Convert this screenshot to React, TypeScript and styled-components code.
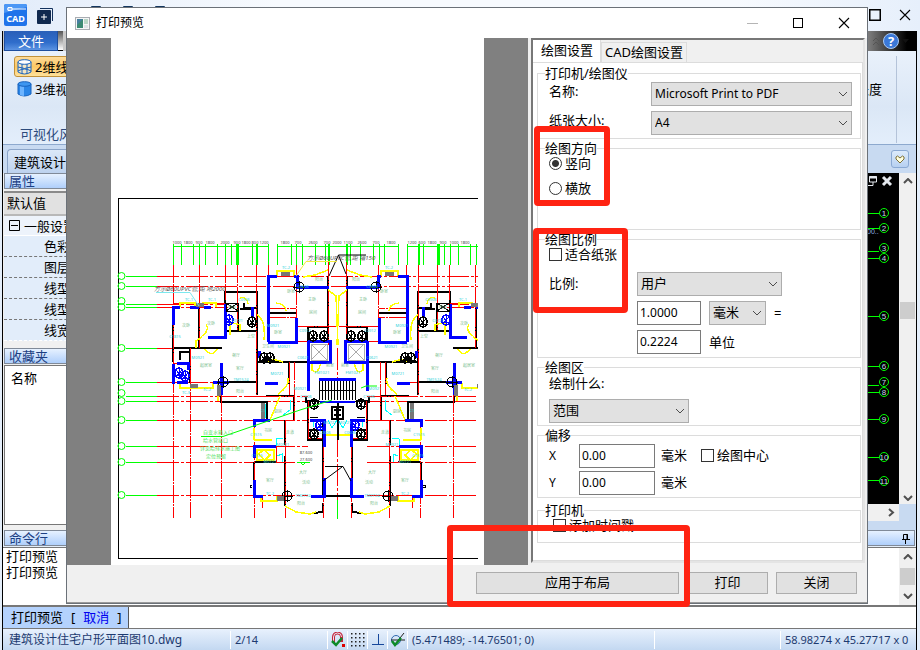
import React from "react";
import styled, { createGlobalStyle, css } from "styled-components";

const ui = `"Noto Sans", "Noto Sans CJK SC", sans-serif`;

const GlobalStyle = createGlobalStyle`
  * { box-sizing: border-box; }
  body { margin: 0; font: 13px/18px ${ui}; color: #000; background: #e4eefa; }
  button, input, select { font: inherit; color: inherit; margin: 0; }
  svg { display: block; flex: none; }
`;

/* ---------- application window ---------- */

const Shell = styled.div`
  position: relative;
  min-height: 100vh;
  display: flex;
  flex-direction: column;
  overflow: hidden;
`;

const TitleBar = styled.header`
  height: 31px;
  flex: none;
  display: flex;
  align-items: flex-start;
  gap: 8px;
  padding: 4px 5px 0 4px;
  background: linear-gradient(90deg, #e2ecfa, #f7fafe 30%, #f7fafe 80%, #e6effb);
`;

const Spacer = styled.div<{ $grow?: number }>`
  flex: ${(p) => p.$grow ?? 1};
`;

const IconButton = styled.button`
  display: flex;
  align-items: center;
  justify-content: center;
  width: 20px;
  height: 22px;
  padding: 0;
  border: 0;
  background: none;
`;

const QuickTools = styled.div`
  display: flex;
  gap: 12px;
  padding-left: 24px;
`;

const WindowButtons = styled.div`
  display: flex;
  gap: 10px;
`;

const Frame = styled.div`
  flex: 1;
  display: flex;
  flex-direction: column;
  margin: 0 3px 1px 2px;
  border-left: 1px solid #000;
  border-right: 1px solid #000;
`;

const RibbonTabs = styled.div`
  height: 20px;
  flex: none;
  display: flex;
  padding-left: 1px;
  background: linear-gradient(90deg, #c7c7c7 0, #d8d8d8 90%, #777 95%, #000 99%);
`;

const FileTab = styled.button`
  width: 54px;
  height: 20px;
  padding: 0;
  border: 1px solid #1e4e9e;
  border-top: 0;
  background: linear-gradient(#2a5fb8, #2f6dcb 60%, #5b93e2);
  color: #fff;
  line-height: 18px;
`;

const TabShade = styled.div`
  width: 5px;
  background: linear-gradient(#555, #fff);
  border-bottom: 1px solid #000;
`;

const TabTail = styled.div`
  display: flex;
  align-items: center;
  gap: 3px;
  margin-left: auto;
  padding-right: 7px;
`;

const Ribbon = styled.section`
  height: 94px;
  flex: none;
  display: flex;
  justify-content: space-between;
  padding: 5px 19px 0 11px;
  border-bottom: 1px solid #8da9ce;
  background: linear-gradient(#e9f1fb, #dbe7f6 60%, #e3eefb);
`;

const StyleTools = styled.div`
  display: flex;
  flex-direction: column;
  gap: 1px;
  width: 100px;
`;

const ToolButton = styled.button<{ $active?: boolean }>`
  height: 21px;
  display: flex;
  align-items: center;
  gap: 3px;
  padding: 0 2px;
  white-space: nowrap;
  border: 1px solid transparent;
  border-radius: 3px;
  background: none;
  ${(p) =>
    p.$active &&
    css`
      border-color: #c2923a;
      background: linear-gradient(#fddb9a, #fdc864 50%, #fee19b);
    `}
`;

const RibbonCaption = styled.span`
  margin-top: auto;
  padding: 0 0 1px 6px;
  color: #2c4a7c;
`;

const RibbonGroup = styled.div`
  margin-bottom: 1px;
  padding: 24px 14px 0 0;
  border-right: 1px solid #b4c3d9;
`;

const DocTabs = styled.div`
  height: 28px;
  flex: none;
  display: flex;
  align-items: center;
  justify-content: space-between;
  padding: 0 7px 0 4px;
  background: #c8daf1;
`;

const DocTab = styled.button`
  align-self: flex-end;
  height: 24px;
  padding: 0 6px;
  border: 1px solid #8ba5c9;
  border-width: 1px 0 0 1px;
  border-radius: 4px 0 0 0;
  background: linear-gradient(#dbe8f8, #bdd2ee);
`;

const HeartButton = styled.button`
  width: 18px;
  height: 18px;
  display: flex;
  align-items: center;
  justify-content: center;
  padding: 0;
  border: 1px solid #8aa9d3;
  border-radius: 3px;
  background: linear-gradient(#dcebfc, #b7d0f0);
`;

const Workspace = styled.div`
  flex: 1;
  display: flex;
  min-height: 348px;
`;

const SidePanel = styled.aside`
  width: 200px;
  display: flex;
  flex-direction: column;
  padding: 0 0 5px 1px;
  background: #f0f0f0;
`;

const PaneTitle = styled.h2`
  height: 16px;
  flex: none;
  display: flex;
  align-items: center;
  justify-content: space-between;
  margin: 0;
  padding: 0 4px 0 4px;
  border: 1px solid #808a98;
  background: linear-gradient(#e6f1ff, #afcffb);
  color: #1c3f83;
  font-size: 13px;
  font-weight: 400;
  line-height: 14px;
`;

const DefaultsRow = styled.div`
  height: 25px;
  margin-top: 2px;
  padding: 1px 3px;
  border-top: 2px solid #8a8a8a;
  border-bottom: 2px solid #b8b8b8;
  background: #e1e1e1;
`;

const SectionRow = styled.div`
  height: 20px;
  display: flex;
  align-items: center;
  gap: 4px;
  padding-left: 5px;
  background: #edf3fb;
  border-bottom: 1px solid #fff;
`;

const PropertyList = styled.ul`
  margin: 0;
  padding: 0;
  list-style: none;
  background: #e2edfa;
`;

const Property = styled.li`
  height: 21px;
  padding: 1px 0 0 40px;
  border-bottom: 1px dashed #777;
  &:last-child { border-bottom-color: #fff; }
`;

const FavouriteTitle = styled(PaneTitle)`
  margin-top: 7px;
`;

const FavouriteList = styled.div`
  flex: 1;
  margin-top: 1px;
  padding: 3px 6px;
  border: 1px solid #777;
  background: #fff;
`;

const CanvasColumn = styled.div`
  flex: 1;
  display: flex;
  flex-direction: column;
  padding-bottom: 8px;
  background: #c8daf1;
`;

const CanvasRow = styled.div`
  flex: 1;
  display: flex;
`;

const ModelCanvas = styled.div`
  flex: 1;
  display: flex;
  justify-content: flex-end;
  background: #000;
`;

const VScroll = styled.div`
  width: 17px;
  display: flex;
  flex-direction: column;
  align-items: center;
  padding: 5px 1px 3px;
  background: #f0f0f0;
`;

const HScroll = styled.div`
  height: 17px;
  margin-right: 17px;
  display: flex;
  align-items: center;
  justify-content: flex-end;
  padding-right: 4px;
  background: #f0f0f0;
  margin-bottom: 1px;
`;

const Thumb = styled.div`
  width: 15px;
  height: 17px;
  background: #cdcdcd;
`;

const CommandTitle = styled(PaneTitle)`
  margin: 0 1px 0 1px;
`;

const CommandLog = styled.div`
  height: 60px;
  flex: none;
  display: flex;
  justify-content: space-between;
  margin-top: 1px;
  padding-left: 3px;
  border-top: 1px solid #777;
  border-bottom: 2px solid #777;
  background: #fff;
  line-height: 16px;
`;

const LogScroll = styled(VScroll)`
  padding: 6px 1px;
`;

const PromptRow = styled.div`
  height: 22px;
  flex: none;
  display: flex;
  background: #fff;
  border-bottom: 1px solid #777;
`;

const Prompt = styled.label`
  width: 126px;
  display: flex;
  gap: 8px;
  padding: 1px 0 0 8px;
  border-right: 1px solid #555;
  background: #b4d2fd;
`;

const CancelLink = styled.a`
  color: #0000f0;
  text-decoration: none;
`;

const PromptInput = styled.input`
  flex: 1;
  border: 0;
  outline: 0;
`;

const StatusBar = styled.footer`
  height: 21px;
  flex: none;
  display: flex;
  align-items: center;
  padding-left: 6px;
  background: linear-gradient(#e8f1fd, #c3d8f1);
  color: #1d3a70;
  font-size: 11px;
`;

const StatusCell = styled.div<{ $grow?: number; $width?: number }>`
  height: 18px;
  flex: ${(p) => (p.$grow ? p.$grow : "none")};
  width: ${(p) => (p.$width ? `${p.$width}px` : "auto")};
  display: flex;
  align-items: center;
  white-space: nowrap;
  padding-left: 4px;
  border-left: 1px solid #fff;
  &:first-child { border-left: 0; padding-left: 0; }
`;

const FileName = styled.span`
  font-size: 12px;
`;

const StatusIcon = styled(IconButton)`
  height: 18px;
  border-left: 1px solid #fff;
`;

/* ---------- print dialog ---------- */

const Dialog = styled.section`
  position: absolute;
  left: 66px;
  right: 52px;
  top: 7px;
  display: flex;
  flex-direction: column;
  border: 1px solid #6b7178;
  background: #f0f0f0;
`;

const DialogTitle = styled.header`
  height: 30px;
  display: flex;
  align-items: center;
  padding: 0 13px 0 8px;
  background: #fff;
  font-size: 12px;
`;

const DialogName = styled.h1`
  flex: 1;
  margin: 0 0 0 6px;
  font-size: 12px;
  font-weight: 400;
`;

const DialogControls = styled.div`
  display: flex;
  gap: 26px;
`;

const DialogBody = styled.div`
  display: flex;
  gap: 3px;
  padding-right: 2px;
`;

const Preview = styled.div`
  flex: 1;
  display: flex;
  justify-content: center;
  background: #808080;
`;

const Page = styled.div`
  background: #fff;
`;

const Settings = styled.div`
  position: relative;
  width: 334px;
  display: flex;
  flex-direction: column;
  margin-bottom: 2px;
  border: 2px solid #e4e4e4;
  border-left-color: #777;
  border-top: 2px solid #777;
`;

const Tabs = styled.div`
  display: flex;
  align-items: flex-end;
  height: 22px;
`;

const Tab = styled.button<{ $active?: boolean }>`
  height: ${(p) => (p.$active ? 23 : 20)}px;
  margin-bottom: ${(p) => (p.$active ? -1 : 0)}px;
  padding: ${(p) => (p.$active ? "0 7px 4px 8px" : "0 3px 1px")};
  border: 1px solid #dcdcdc;
  border-width: ${(p) => (p.$active ? "0 1px 0 0" : "1px 1px 0 1px")};
  background: ${(p) => (p.$active ? "#fff" : "#f0f0f0")};
  line-height: 18px;
  white-space: nowrap;
`;

const TabBody = styled.form`
  flex: 1;
  padding: 1px 1px 15px 4px;
  border: 1px solid #dcdcdc;
  border-left: 0;
  background: #fff;
`;

const Group = styled.fieldset<{ $bottom: number; $top?: number }>`
  min-width: 0;
  margin: ${(p) => p.$top ?? 0}px 0 0;
  padding: 0 8px ${(p) => p.$bottom}px 11px;
  border: 1px solid #dcdcdc;
`;

const Legend = styled.legend`
  margin-left: -4px;
  padding: 0;
  line-height: 18px;
`;

const Fields = styled.div<{ $label: number }>`
  display: grid;
  grid-template-columns: ${(p) => p.$label}px 1fr;
  row-gap: 5px;
  align-items: start;
`;

const FieldLabel = styled.label<{ $line?: number }>`
  display: block;
  line-height: ${(p) => p.$line ?? 18}px;
`;

const FieldRow = styled.div`
  display: flex;
  align-items: center;
  gap: 8px;
`;

const ScaleFields = styled(Fields)`
  margin-top: 9px;
`;

const RatioColumn = styled.div`
  display: flex;
  flex-direction: column;
  gap: 5px;
`;

const AreaField = styled.div`
  display: flex;
  flex-direction: column;
  gap: 9px;
`;

const ChoiceColumn = styled.div`
  display: flex;
  flex-direction: column;
  gap: 10px;
`;

const Choice = styled.label<{ $indent?: number }>`
  height: 15px;
  display: flex;
  align-items: flex-start;
  gap: 3px;
  margin-left: ${(p) => p.$indent ?? 0}px;
  line-height: 12px;
  white-space: nowrap;
`;

const CheckBox = styled.input.attrs({ type: "checkbox" })`
  appearance: none;
  width: 13px;
  height: 13px;
  flex: none;
  border: 1px solid #333;
  background: #fff;
`;

const Radio = styled.input.attrs({ type: "radio" })`
  appearance: none;
  width: 13px;
  height: 13px;
  flex: none;
  border: 1px solid #333;
  border-radius: 50%;
  background: #fff;
  &:checked { background: radial-gradient(circle, #333 0 3px, #fff 4px); }
`;

const SelectWrap = styled.span<{ $width?: number }>`
  position: relative;
  display: block;
  width: ${(p) => (p.$width ? `${p.$width}px` : "100%")};
  svg { position: absolute; right: 4px; top: 9px; pointer-events: none; }
`;

const SelectBox = styled.select<{ $latin?: boolean }>`
  appearance: none;
  display: block;
  width: 100%;
  height: 24px;
  padding: ${(p) => (p.$latin ? "0 14px 0 3px" : "0 14px 2px 3px")};
  border: 1px solid #adadad;
  border-radius: 0;
  background: #e1e1e1;
  font-size: ${(p) => (p.$latin ? 12 : 13)}px;
`;

const TextBox = styled.input<{ $width: number }>`
  width: ${(p) => p.$width}px;
  height: 24px;
  padding: 0 2px 2px;
  border: 1px solid #7a7a7a;
  background: #fff;
  font-size: 12px;
`;

const OffsetGrid = styled.div`
  display: grid;
  grid-template-columns: 30px 76px 40px auto;
  row-gap: 3px;
  justify-content: start;
  align-items: center;
`;

const Axis = styled.label`
  font-size: 12px;
`;

const Unit = styled.span`
  padding: 0 0 2px 6px;
`;

const DialogFooter = styled.footer`
  position: relative;
  height: 38px;
  display: flex;
  justify-content: flex-end;
  gap: 8px;
  padding: 7px 10px 0 0;
  border-bottom: 1px solid #9a9a9a;
`;

const PushButton = styled.button<{ $wide?: boolean }>`
  width: ${(p) => (p.$wide ? 203 : 81)}px;
  height: 22px;
  padding: 0 0 2px;
  border: 1px solid #adadad;
  background: #e1e1e1;
  line-height: 18px;
`;

const Highlight = styled.div<{ $area: "orientation" | "scale" | "apply" }>`
  position: absolute;
  border: 6px solid #ff2312;
  border-radius: 4px;
  pointer-events: none;
  ${(p) =>
    p.$area === "orientation" &&
    css`left: 1px; top: 86px; width: 76px; height: 80px;`}
  ${(p) =>
    p.$area === "scale" &&
    css`left: 0; top: 188px; width: 95px; height: 85px;`}
  ${(p) =>
    p.$area === "apply" &&
    css`right: 177px; top: -40px; width: 243px; height: 82px;`}
`;

/* ---------- icons ---------- */

const Chevron = ({ up, bold }: { up?: boolean; bold?: boolean }) => (
  <svg width="10" height="6" viewBox="0 0 10 6" fill="none" stroke={bold ? "#505050" : "#4c4c4c"} strokeWidth={bold ? 2 : 1}>
    <path d={up ? "M1 5 5 1 9 5" : "M1 1 5 5 9 1"} />
  </svg>
);

const CloseGlyph = () => (
  <svg width="12" height="12" viewBox="0 0 12 12" stroke="#000" strokeWidth="1.1">
    <path d="M1 1 11 11M11 1 1 11" />
  </svg>
);

const SquareGlyph = ({ size = 11, weight = 1 }: { size?: number; weight?: number }) => (
  <svg width={size} height={size} viewBox={`0 0 ${size} ${size}`} fill="none" stroke="#000" strokeWidth={weight}>
    <rect x={weight / 2} y={weight / 2} width={size - weight} height={size - weight} />
  </svg>
);

const CadLogo = () => (
  <svg width="23" height="22" viewBox="0 0 23 22" role="img" aria-label="CAD">
    <rect width="23" height="22" rx="2" fill="#1f73ea" />
    <path d="M0 9 23 3V2Q23 0 21 0H2Q0 0 0 2Z" fill="#4c97f5" />
    <path d="M3 5H22M4 3.500h4v3h-4z" stroke="#fff" fill="#1f73ea" />
    <text x="11.500" y="17.500" fill="#fff" fontSize="9" fontWeight="700" textAnchor="middle" fontFamily="Noto Sans">CAD</text>
  </svg>
);

const PlusIcon = () => (
  <svg width="17" height="17" viewBox="0 0 17 17">
    <path d="M3 1.500H15.500V14" fill="none" stroke="#12315d" />
    <rect y="3" width="14" height="14" rx="1" fill="#10294f" />
    <path d="M7 7v6M4 10h6" stroke="#fff" />
  </svg>
);

const ToolBlock = () => (
  <svg width="14" height="18" viewBox="0 0 14 18"><rect x="1" width="10" height="15" rx="1" fill="#14375f" /></svg>
);

const Cylinder = ({ solid }: { solid?: boolean }) => (
  <svg width="15" height="16" viewBox="0 0 15 16">
    <path d="M1 3V13Q7.500 17 14 13V3Z" fill={solid ? "#2a86e8" : "#f3e6c4"} stroke="#1762be" />
    {solid && <path d="M3 4V14Q5 15 7 15V5Z" fill="#6db4ff" />}
    <ellipse cx="7.500" cy="3" rx="6.500" ry="2.300" fill={solid ? "#3d96f0" : "#fff"} stroke="#1762be" />
    {!solid && <path d="M5 5V15M10 5V15M1 8Q7.500 11 14 8M1 12Q7.500 8 14 12" fill="none" stroke="#1762be" />}
  </svg>
);

const MinusBox = () => (
  <svg width="11" height="11" viewBox="0 0 11 11" fill="none" stroke="#000"><path d="M.5.5h10v10H.5ZM2 5.500h7" /></svg>
);

const DialogIcon = () => (
  <svg width="15" height="13" viewBox="0 0 15 13">
    <rect x=".5" y=".5" width="14" height="12" fill="#f5f5f5" stroke="#a9adb2" />
    <rect x="2" y="2" width="6" height="9" fill="#3c8a72" />
    <path d="M2 2h6L2 8Z" fill="#477f9f" />
    <rect x="9" y="2" width="4" height="5" fill="#b9d6c6" />
    <rect x="9" y="8" width="4" height="3" fill="#dfe3e6" />
  </svg>
);

const HelpIcon = () => (
  <svg width="16" height="16" viewBox="0 0 16 16">
    <circle cx="8" cy="8" r="7.500" fill="#3a78d8" stroke="#a8c8f2" />
    <text x="8" y="12.500" fill="#fff" fontSize="13" fontWeight="700" textAnchor="middle" fontFamily="Noto Sans">?</text>
  </svg>
);

const Pin = () => (
  <svg width="8" height="11" viewBox="0 0 8 11" fill="none" stroke="#000">
    <path d="M1.500 6V1.500H5.500V6M5 1V6M0 6.500H8M3.500 7V11" />
  </svg>
);

const Heart = () => (
  <svg width="10" height="9" viewBox="0 0 10 9" fill="#ffffe0" stroke="#7d6f35">
    <path d="M5 8 1 4V2L2.500 1 5 3 7.500 1 9 2V4Z" />
  </svg>
);

const CollapseIcon = () => (
  <svg width="8" height="9" viewBox="0 0 8 9" fill="none" stroke="#555"><path d="M1 4 4 1 7 4M1 8 4 5 7 8" /></svg>
);

const DropIcon = () => (
  <svg width="7" height="4" viewBox="0 0 7 4"><path d="M0 0h7L3.500 4Z" fill="#111" /></svg>
);

const SnapIcon = () => (
  <svg width="15" height="15" viewBox="0 0 15 15" fill="none">
    <path d="M3.500 10V5a4 4 0 0 1 8 0v5" stroke="#c4243a" strokeWidth="3" />
    <path d="M3.500 9V5a4 4 0 0 1 8 0" stroke="#e8e3ee" />
    <path d="M2 9 6 13 12 6" stroke="#0d8a28" strokeWidth="2.500" />
    <rect x="12" y="12" width="3" height="3" fill="#d00" />
  </svg>
);

const GridIcon = () => (
  <svg width="15" height="15" viewBox="0 0 15 15" fill="#222">
    {[0, 4, 8, 12].map((y) => [0, 4, 8, 12].map((x) => <rect key={`${x}-${y}`} x={x + 1} y={y + 1} width="1.500" height="1.500" />))}
  </svg>
);

const OrthoIcon = () => (
  <svg width="14" height="13" viewBox="0 0 14 13" stroke="#17479b"><path d="M7.500 1V11.500M1 11.500H13" /></svg>
);

const PolarIcon = () => (
  <svg width="16" height="15" viewBox="0 0 16 15" fill="none">
    <circle cx="6" cy="8" r="4.500" stroke="#3068b0" />
    <path d="M1 8H15M6 11 14 1" stroke="#222" />
    <path d="M2 9 5 13 11 6" stroke="#0d8a28" strokeWidth="2.500" />
  </svg>
);

/* ---------- drawings ---------- */

const modelAxes: [number, number][] = [
  [213, 213], [228, 228], [248, 251], [258, 258], [316, 316], [366, 366], [382, 385], [392, 392], [419, 419], [457, 457], [481, 480],
];

const ModelDrawing = () => (
  <svg width="50" height="331" viewBox="850 173 50 331">
    <g fill="none" stroke="#0f0">
      {modelAxes.map(([c, l]) => (
        <React.Fragment key={c}>
          <path d={`M850 ${l + 0.5}H880`} shapeRendering="crispEdges" />
          <circle cx="885" cy={c} r="4.500" />
        </React.Fragment>
      ))}
    </g>
    {modelAxes.map(([c], i) => (
      <text key={c} x="885" y={c + 3} fill="#c9d4ee" fontSize="8" textAnchor="middle" fontFamily="Liberation Sans">{i + 1}</text>
    ))}
    <text x="868" y="234" fill="#8fb4ea" fontSize="7" fontFamily="Liberation Sans">00..</text>
    <g fill="none" stroke="#e4e8ee">
      <path d="M870.500 176.500H877.500V182H870.500ZM867.500 180.500V185.500H874V182" />
      <path d="M870 177.500H878" strokeWidth="2" />
      <path d="M884 177 892 185M892 177 884 185" strokeWidth="3" />
    </g>
  </svg>
);

const axisRows: [number, number][] = [
  [276, 276], [286, 286], [301, 304], [307, 307], [348, 348], [382, 382], [393, 396], [401, 401], [420, 420], [446, 446], [462, 462], [495, 495],
];

const ticks = [173, 181, 193, 199, 205, 217, 225, 231, 236, 237, 238, 252, 256, 257, 268, 277, 291, 296, 302, 315, 325, 328, 329];

const halfRed =
  "M173.500 265V518M190.500 348V518M221.500 395V518M199.500 265V348M225.500 265V300M237.500 265V331M256.500 265V395M268.500 265V300M296.500 265V342M254.500 420V518M285.500 420V518M328.500 262V345M323.500 440V518M262.500 495V508M289.500 362V395M294.500 362V420M268 308.500H296M268 317.500H296M296 326.500H338M266 396.500H294M173 303.500H225M276 446V462H285M190 363H173M308.500 401V438H322M296 341H308";
const halfBlack =
  "M173 307V362M173 348H222M190 348V383M199 307V348M225 304V292H257V395M238 303V331M225 331H257M268 313H297M257 362H297M289 362V384M221 383V402H267V420M266 396H294V420M222 382H257M285 420V445M285 456V506M254 462V480M254 462H277M328 276V341M308 341V327H329M307 401H337M308 401V440H324M323 420V497M323 496H338M323 503V512L314 513M296 362H308V378M240 309H252M309 430H323M180 360V352H190M244 303V308H256M306 397V403";
const halfBlue =
  "M173 325V307H180M190 307H199M204 307H211M268 342V276H277M294 276H297V288M296 318V342H268M225 304V337H208M296 287H329M221 363V395M213 382H229M265 383H278M254 427V420H270M276 446H254V458M254 480V496H263M308 341H330V362H308V341M308 362V379M308 379V391M324 447V420H310M311 496H324V478M252 307V317M319 379H338M320 401H338M173 364V384M177 363H188V370M177 382H188M259 351V358";
const halfYellow =
  "M180 307V303H195V307M203 307V303H216V307M277 276V271H294V276M180 383V388H213V383M261 496V501H277V496M254 428V440M254 440H272M257 450H274V460H257ZM258 454 264 450 270 455 265 460 258 454M303 277 315 275 328 270M285 506 296 512 310 514 316 512M324 435H338M196 348V341L202 337M270 420 280 396M218 383V401M230 335V322L240 325V331M276 303Q286 304 286 311M283 362Q274 358 266 362M203 336Q210 328 206 325M278 394Q290 386 288 378M328 290 336 296 338 345M312 362V370Q318 376 321 362M205 349Q212 358 217 349M240 298Q247 296 248 304M257 315Q266 320 264 340";
const halfCyan = "M265 404V418M276 446V439L283 438M277 456 282 454V462M290 400V410L283 415M313 420V427M328 420 332 428 337 420";

const blocks: [number, number, string][] = [
  [252, 322, "#000"], [264, 358, "#000"], [270, 358, "#000"], [229, 320, "#00f"], [313, 336, "#000"], [324, 336, "#000"],
  [179, 373, "#00f"], [185, 376, "#00f"], [314, 404, "#000"], [320, 425, "#00f"], [314, 434, "#000"],
];

const cyanLabels: [number, number, string][] = [
  [189, 301, "TC-1"], [212, 301, "TC-1"], [286, 269, "TC-2"], [244, 301, "C0906"], [175, 338, "C1815"], [198, 359, "M0921"],
  [273, 327, "M0921"], [237, 322, "C0721"], [284, 348, "M0921"], [241, 381, "TM1524"], [186, 394, "TC-3"], [207, 391, "TC-2"],
  [263, 412, "C1"], [256, 436, "C1515"], [283, 446, "M0921"], [270, 463, "M0721"], [257, 457, "C1515"], [270, 495, "TC-2"],
  [303, 288, "C0606"], [305, 332, "C0912"], [303, 359, "C0621"], [303, 497, "TM2724"], [322, 374, "FM1021"], [330, 424, "M0721"],
  [306, 398, "C1506"], [300, 390, "M0921"], [277, 375, "M0721"], [325, 434, "C0606"],
];

const roomLabels: [number, number, string][] = [
  [186, 327, "次卧"], [211, 325, "次卧"], [206, 367, "起居室"], [236, 357, "餐厅"], [240, 370, "客厅"], [251, 338, "上空"],
  [291, 293, "卧室"], [278, 334, "卧室"], [312, 301, "主卧"], [313, 314, "房间"], [240, 393, "阳台"], [278, 413, "厨房"],
  [268, 432, "书房"], [270, 482, "客厅"], [303, 474, "大厅"], [306, 484, "活动"], [301, 505, "阳台"], [268, 348, "卫生间"],
  [330, 367, "前室"], [290, 434, "走道"], [232, 309, "阳台"], [319, 281, "阳台"],
];

const dims: [number, string][] = [
  [177, "1000"], [188, "1800"], [199, "900"], [210, "1800"], [225, "2000"], [237, "900"], [246, "1800"], [255, "800"], [264, "1200"],
  [285, "1800"], [298, "700"], [313, "2600"], [327, "700"], [337, "2000"], [348, "1100"], [362, "2600"], [376, "700"],
  [391, "1800"], [412, "1200"], [422, "600"], [432, "1800"], [443, "900"], [454, "1000"], [465, "1800"],
];

const PlanHalf = () => (
  <g>
    <path d={halfBlack} stroke="#000" strokeWidth="2" />
    <path d={halfRed} stroke="#f00" strokeDasharray="18 1 2 1" />
    <path d={halfYellow} stroke="#ff0" strokeWidth="1.500" />
    <path d={halfCyan} stroke="#0ff" />
    <path d={halfBlue} stroke="#00f" strokeWidth="3" />
    {blocks.map(([x, y, c]) => (
      <g key={`${x}-${y}`} stroke={c}>
        <ellipse cx={x} cy={y} rx="4" ry="5" strokeWidth="1.500" />
        <path d={`M${x - 5} ${y + 2}H${x + 5}M${x - 3} ${y - 3} ${x + 3} ${y + 4}M${x} ${y - 5}V${y + 5}M${x + 4} ${y - 4} ${x - 3} ${y + 4}`} />
      </g>
    ))}
    {[[299, 287], [223, 382], [287, 496]].map(([x, y]) => (
      <g key={x} stroke="#000">
        <circle cx={x} cy={y} r="5" />
        <path d={`M${x - 6} ${y}H${x + 6}M${x} ${y - 6}V${y + 6}`} />
      </g>
    ))}
    <g fill="#777" stroke="none">
      <rect x="281" y="272" width="9" height="4" />
      <rect x="196" y="303" width="8" height="4" />
      <rect x="217" y="385" width="4" height="11" />
      <rect x="190" y="384" width="8" height="4" />
      <rect x="261" y="403" width="4" height="16" />
      <rect x="277" y="496" width="7" height="5" />
    </g>
    <path d="M226 303H238V311H226ZM226 303 238 311M238 303 226 311" stroke="#000" />
    <path d="M311 344H327V360H311ZM311 344 327 360M327 344 311 360" stroke="#aaa" />
    <path d="M252 485H250V487H252M310 417H318" stroke="#000" />
  </g>
);

const PairedLabels = ({ items }: { items: [number, number, string][] }) => (
  <>
    {items.map(([x, y, t]) => (
      <React.Fragment key={`${x}-${y}`}>
        <text x={x} y={y}>{t}</text>
        {x > 205 && <text x={675 - x} y={y}>{t}</text>}
      </React.Fragment>
    ))}
  </>
);

const axisPath = (y: number) => {
  if (y === 348) return "M157 348.500H173";
  if (y === 304 || y === 307) return `M157 ${y}.5H228M447 ${y}.5H478`;
  if (y === 382) return "M157 382.500H216M408 382.500H446";
  if (y > 390) return `M157 ${y}.5H308M367 ${y}.5H478`;
  return `M157 ${y}.5H478`;
};

const FloorPlan = () => (
  <svg width="373" height="527" viewBox="111 38 373 527" role="img" aria-label="建筑平面图">
    <defs>
      <clipPath id="sheet"><rect x="111" y="38" width="367" height="527" /></clipPath>
    </defs>
    <g clipPath="url(#sheet)" fill="none" shapeRendering="crispEdges">
      <path d="M480 198.500H118.500V558.500H480" stroke="#000" />
      <g stroke="#f00" strokeDasharray="22 2 3 2">
        {axisRows.map(([, y]) => (
          <path key={y} d={axisPath(y)} />
        ))}
        <path d="M337.500 348V500M412.500 495V508" />
      </g>
      <g stroke="#0f0">
        {axisRows.map(([c, y]) => (
          <path key={c} d={`M126 ${y}.5H157`} />
        ))}
        <path d="M173 246.500H268M277 246.500H398M407 246.500H478" />
        {ticks.map((x) => (
          <path key={x} d={`M${x}.5 244V265M${675 - x}.5 244V265`} />
        ))}
        <path d="M337.500 500V519" />
      </g>
      <PlanHalf />
      <g transform="translate(675 0) scale(-1 1)"><PlanHalf /></g>
      <rect x="319" y="381" width="37" height="20" fill="#fff" />
      <path d={Array.from({ length: 13 }, (_, i) => `M${319.5 + i * 3} 381V400`).join("") + "M319 390.500H356"} stroke="#000" />
      <path d="M337.500 403V440" stroke="#000" strokeWidth="2" />
      <path d="M332 407H343V419H332ZM334 410H341M334 415H341M337 407V419" stroke="#000" strokeWidth="2" />
    </g>
    <g fill="none" clipPath="url(#sheet)">
      {axisRows.map(([c]) => (
        <circle key={c} cx="121.500" cy={c} r="3.500" stroke="#0f0" />
      ))}
      <path d="M329 276 338.500 255 346 274M338.500 255H366M325 466.500H343L351 481M323 481 342 467" stroke="#000" />
      <path d="M156 292.500H190L199 306" stroke="#7ce8ee" />
      <path d="M296 276 306 261.500H337" stroke="#f4ec40" />
      <path d="M201 436.500H223L300 410 332 400M361 388 366 386H377M297 462.500H310M300 462 303 465 306 462" stroke="#0f0" />
    </g>
    <g clipPath="url(#sheet)" fontFamily="Noto Sans, Noto Sans CJK SC" textAnchor="middle">
      <g fill="#2fd3da" fontSize="4"><PairedLabels items={cyanLabels} /></g>
      <g fill="#7fbf92" fontSize="4"><PairedLabels items={roomLabels} /></g>
      <g fill="#444" fontSize="4">
        {dims.map(([x, t]) => (
          <text key={x} x={x} y="244">{t}</text>
        ))}
        <text x="306" y="454">87.600</text>
        <text x="306" y="461">27.600</text>
      </g>
      <g fill="#555" fontSize="6" fontStyle="italic" textAnchor="start">
        <text x="154" y="291">方示Ø60UPVC管,距 地2000</text>
        <text x="307" y="260">方示Ø60UPVC管,距 墙150</text>
      </g>
      <g fill="#4fe060" fontSize="5" textAnchor="start">
        <text x="203" y="434">自变水箱入口</text>
        <text x="203" y="442">给水管接口</text>
        <text x="200" y="450">详见给排水施工图</text>
        <text x="206" y="458">定位预留</text>
      </g>
    </g>
  </svg>
);

/* ---------- composition ---------- */

type DropProps = { id: string; label?: string; value: string; width?: number; latin?: boolean };

const Drop = ({ id, label, value, width, latin }: DropProps) => (
  <SelectWrap $width={width}>
    <SelectBox id={id} aria-label={label} $latin={latin} defaultValue={value}>
      <option>{value}</option>
    </SelectBox>
    <Chevron />
  </SelectWrap>
);

const PrintDialog = () => (
  <Dialog role="dialog" aria-labelledby="dialog-name">
    <DialogTitle>
      <DialogIcon />
      <DialogName id="dialog-name">打印预览</DialogName>
      <DialogControls>
        <IconButton aria-label="最小化">
          <svg width="11" height="2" viewBox="0 0 11 2"><path d="M0 1.500H11" stroke="#b5b5b5" /></svg>
        </IconButton>
        <IconButton aria-label="最大化"><SquareGlyph size={10} /></IconButton>
        <IconButton aria-label="关闭窗口"><CloseGlyph /></IconButton>
      </DialogControls>
    </DialogTitle>
    <DialogBody>
      <Preview>
        <Page><FloorPlan /></Page>
      </Preview>
      <Settings>
        <Tabs role="tablist">
          <Tab role="tab" aria-selected="true" $active>绘图设置</Tab>
          <Tab role="tab" aria-selected="false">CAD绘图设置</Tab>
        </Tabs>
        <TabBody>
          <Group $bottom={3}>
            <Legend>打印机/绘图仪</Legend>
            <Fields $label={102}>
              <FieldLabel htmlFor="printer">名称:</FieldLabel>
              <Drop id="printer" value="Microsoft Print to PDF" latin />
              <FieldLabel htmlFor="paper">纸张大小:</FieldLabel>
              <Drop id="paper" value="A4" latin />
            </Fields>
          </Group>
          <Group $bottom={32}>
            <Legend>绘图方向</Legend>
            <ChoiceColumn>
              <Choice><Radio name="orientation" defaultChecked />竖向</Choice>
              <Choice><Radio name="orientation" />横放</Choice>
            </ChoiceColumn>
          </Group>
          <Group $bottom={3}>
            <Legend>绘图比例</Legend>
            <Choice><CheckBox />适合纸张</Choice>
            <ScaleFields $label={88}>
              <FieldLabel htmlFor="ratio" $line={22}>比例:</FieldLabel>
              <RatioColumn>
                <Drop id="ratio" value="用户" width={145} />
                <FieldRow>
                  <TextBox $width={64} defaultValue="1.0000" aria-label="图纸长度" />
                  <Drop id="unit" label="长度单位" value="毫米" width={57} />
                  <span>=</span>
                </FieldRow>
                <FieldRow>
                  <TextBox $width={64} id="units" defaultValue="0.2224" />
                  <label htmlFor="units">单位</label>
                </FieldRow>
              </RatioColumn>
            </ScaleFields>
          </Group>
          <Group $bottom={2}>
            <Legend>绘图区</Legend>
            <AreaField>
              <FieldLabel htmlFor="area" $line={14}>绘制什么:</FieldLabel>
              <Drop id="area" value="范围" width={140} />
            </AreaField>
          </Group>
          <Group $bottom={2}>
            <Legend>偏移</Legend>
            <OffsetGrid>
              <Axis htmlFor="offset-x">X</Axis>
              <TextBox $width={76} id="offset-x" defaultValue="0.00" />
              <Unit>毫米</Unit>
              <Choice $indent={6}><CheckBox />绘图中心</Choice>
              <Axis htmlFor="offset-y">Y</Axis>
              <TextBox $width={76} id="offset-y" defaultValue="0.00" />
              <Unit>毫米</Unit>
            </OffsetGrid>
          </Group>
          <Group $bottom={8} $top={3}>
            <Legend>打印机</Legend>
            <Choice $indent={4}><CheckBox />添加时间戳</Choice>
          </Group>
        </TabBody>
        <Highlight $area="orientation" />
        <Highlight $area="scale" />
      </Settings>
    </DialogBody>
    <DialogFooter>
      <PushButton $wide>应用于布局</PushButton>
      <PushButton>打印</PushButton>
      <PushButton>关闭</PushButton>
      <Highlight $area="apply" />
    </DialogFooter>
  </Dialog>
);

export default function App() {
  return (
    <>
      <GlobalStyle />
      <Shell>
        <TitleBar>
          <CadLogo />
          <IconButton aria-label="新建"><PlusIcon /></IconButton>
          <QuickTools>
            <IconButton aria-label="打开"><ToolBlock /></IconButton>
            <IconButton aria-label="保存"><ToolBlock /></IconButton>
            <IconButton aria-label="另存为"><ToolBlock /></IconButton>
          </QuickTools>
          <Spacer />
          <WindowButtons>
            <IconButton aria-label="还原"><SquareGlyph size={12} weight={1.5} /></IconButton>
            <IconButton aria-label="退出"><CloseGlyph /></IconButton>
          </WindowButtons>
        </TitleBar>
        <Frame>
          <RibbonTabs>
            <FileTab>文件</FileTab>
            <TabShade />
            <TabTail><CollapseIcon /><HelpIcon /><DropIcon /></TabTail>
          </RibbonTabs>
          <Ribbon>
            <StyleTools>
              <ToolButton $active><Cylinder />2维线框</ToolButton>
              <ToolButton><Cylinder solid />3维视图</ToolButton>
              <RibbonCaption>可视化风格</RibbonCaption>
            </StyleTools>
            <RibbonGroup>长度</RibbonGroup>
          </Ribbon>
          <DocTabs>
            <DocTab>建筑设计住宅户形平面图10.dwg</DocTab>
            <HeartButton aria-label="收藏"><Heart /></HeartButton>
          </DocTabs>
          <Workspace>
            <SidePanel>
              <PaneTitle>属性</PaneTitle>
              <DefaultsRow>默认值</DefaultsRow>
              <SectionRow><MinusBox />一般设置</SectionRow>
              <PropertyList>
                {["色彩", "图层", "线型", "线型比例", "线宽"].map((name) => (
                  <Property key={name}>{name}</Property>
                ))}
              </PropertyList>
              <FavouriteTitle>收藏夹</FavouriteTitle>
              <FavouriteList>名称</FavouriteList>
            </SidePanel>
            <CanvasColumn>
              <CanvasRow>
                <ModelCanvas><ModelDrawing /></ModelCanvas>
                <VScroll>
                  <Chevron up bold />
                  <Spacer $grow={2} />
                  <Thumb />
                  <Spacer $grow={3} />
                  <Chevron bold />
                </VScroll>
              </CanvasRow>
              <HScroll>
                <svg width="7" height="9" viewBox="0 0 7 9" fill="none" stroke="#505050" strokeWidth="2"><path d="M1 1 5 4.500 1 8" /></svg>
              </HScroll>
            </CanvasColumn>
          </Workspace>
          <CommandTitle>命令行<Pin /></CommandTitle>
          <CommandLog>
            <div>打印预览<br />打印预览</div>
            <LogScroll>
              <Chevron up bold />
              <Spacer />
              <Thumb />
              <Spacer />
              <Chevron bold />
            </LogScroll>
          </CommandLog>
          <PromptRow>
            <Prompt htmlFor="command">打印预览 <span>[</span><CancelLink href="#cancel">取消</CancelLink><span>]</span></Prompt>
            <PromptInput id="command" />
          </PromptRow>
          <StatusBar>
            <StatusCell $width={221}><FileName>建筑设计住宅户形平面图10.dwg</FileName></StatusCell>
            <StatusCell $width={97}>2/14</StatusCell>
            <StatusIcon aria-label="捕捉"><SnapIcon /></StatusIcon>
            <StatusIcon aria-label="栅格"><GridIcon /></StatusIcon>
            <StatusIcon aria-label="正交"><OrthoIcon /></StatusIcon>
            <StatusIcon aria-label="极轴"><PolarIcon /></StatusIcon>
            <StatusCell $grow={2}>(5.471489; -14.76501; 0)</StatusCell>
            <StatusCell $grow={1} />
            <StatusCell $width={136}>58.98274 x 45.27717 x 0</StatusCell>
          </StatusBar>
        </Frame>
        <PrintDialog />
      </Shell>
    </>
  );
}
